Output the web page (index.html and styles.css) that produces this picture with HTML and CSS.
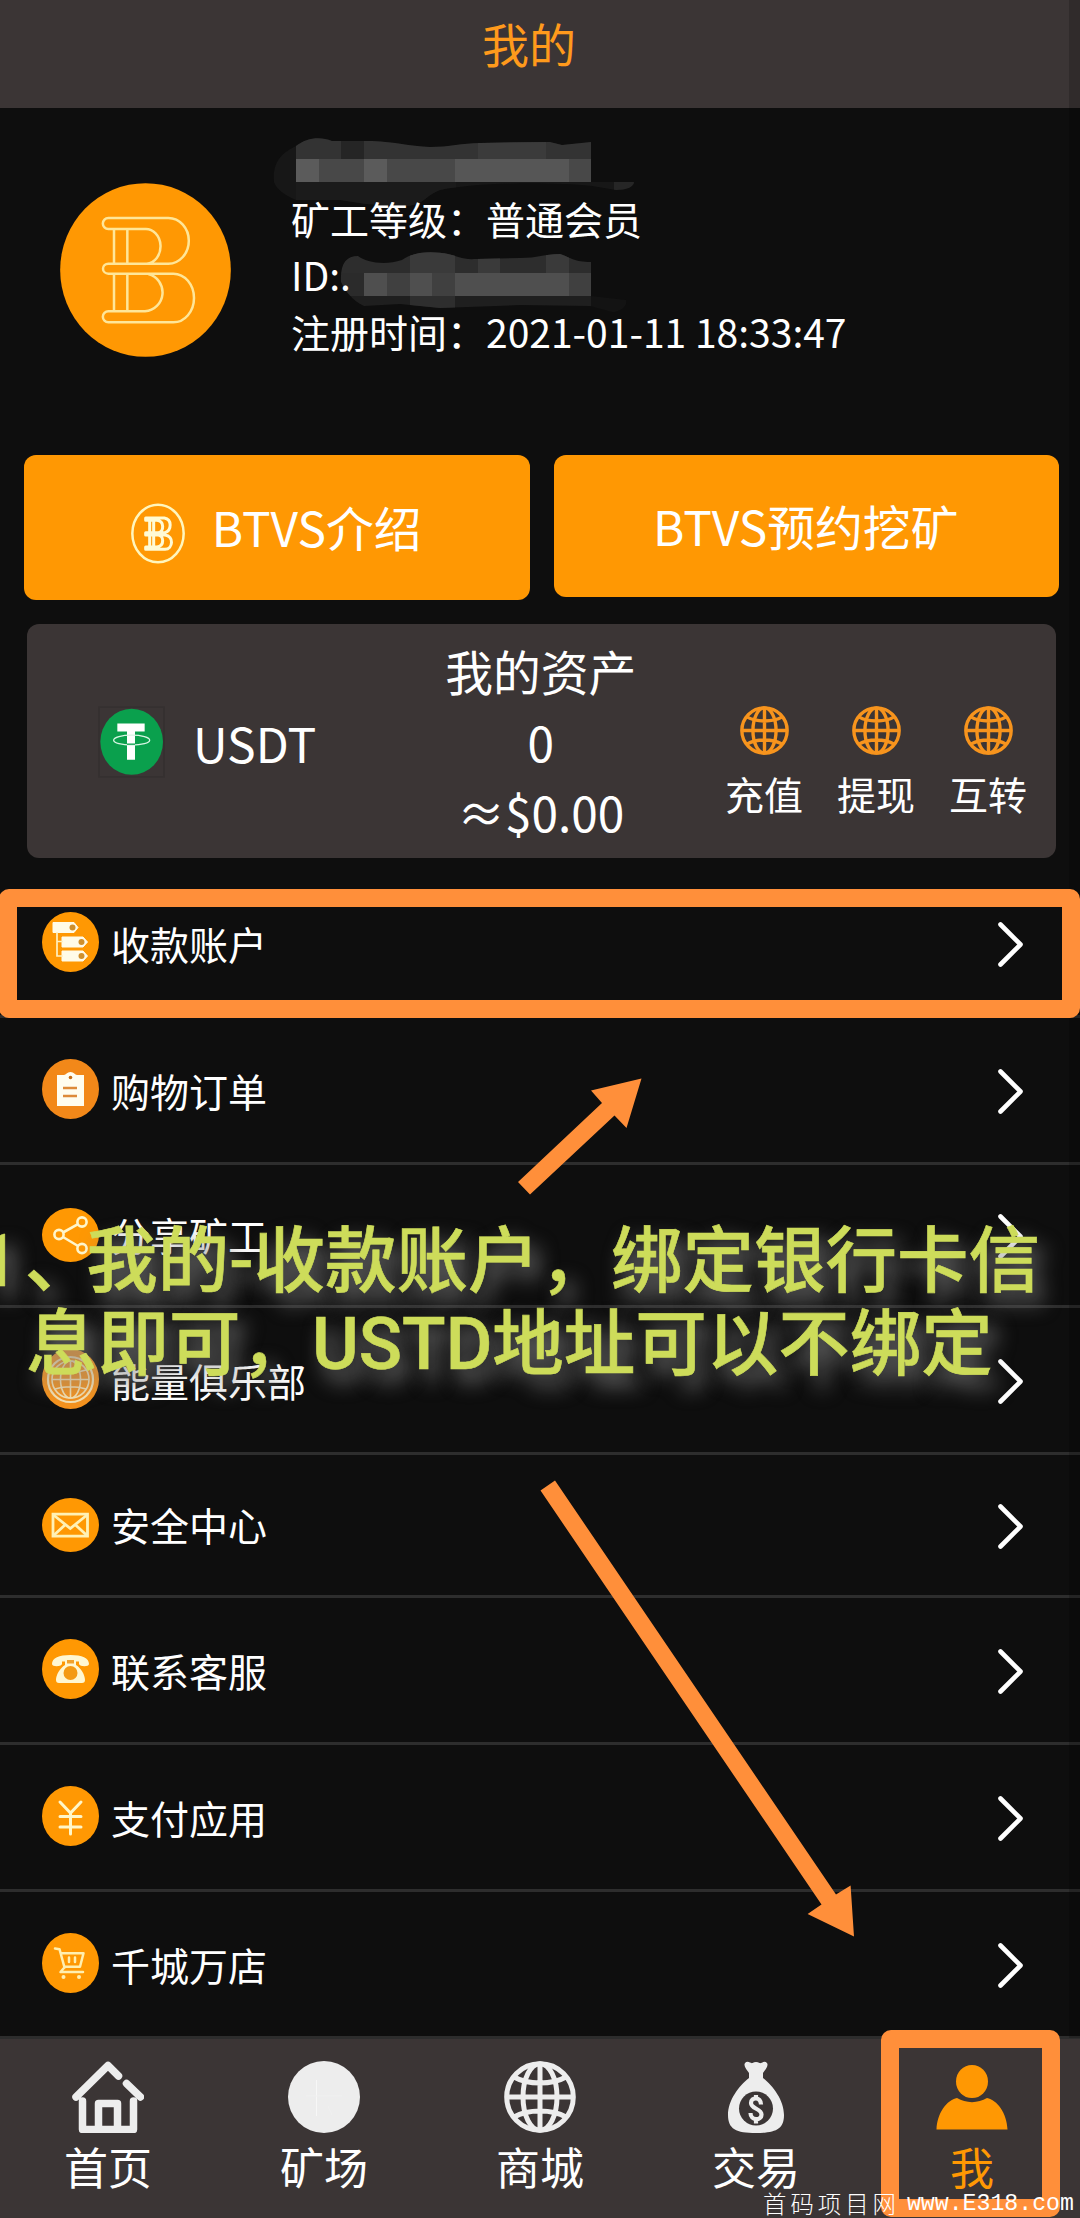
FILE: index.html
```html
<!DOCTYPE html>
<html lang="zh-CN">
<head>
<meta charset="utf-8">
<title>我的</title>
<link rel="stylesheet" href="styles.css">
</head>
<body>
<svg class="defs" aria-hidden="true">
  <symbol id="chevron" viewBox="0 0 25 45"><path d="M2.5 2.5 22.5 22.5 2.5 42.5" fill="none" stroke="#fff" stroke-width="4.600" stroke-linecap="round" stroke-linejoin="round"/></symbol>
  <symbol id="globe" viewBox="0 0 72 72"><g fill="none" stroke="currentColor" stroke-width="5"><circle cx="36" cy="36" r="33.3"/><ellipse cx="36" cy="36" rx="17" ry="33.3"/><path d="M36 3v66M3 36h66M10 16c14 8 38 8 52 0M10 56c14-8 38-8 52 0"/></g></symbol>
</svg>
<div class="screen">
  <header class="topbar">我的</header>

  <section class="profile">
    <svg class="avatar" viewBox="60 69 513 522">
      <ellipse cx="316.500" cy="330" rx="256" ry="260.500" fill="#ff9803"/>
      <g fill="none" stroke="#ffe698" stroke-width="7.500">
        <path d="M385 174H205a16 16 0 0 0 0 33H315a44 52 0 0 1 5 104M385 174a61 68 0 0 1 0 137H205a16 15 0 0 0 0 30H400a62 73 0 0 1 0 146H205a16 16 0 0 1 0-33H315a57 57 0 0 0 10-112"/>
        <path d="M222 207v104M262 207v104M222 341v113M262 341v113"/>
      </g>
    </svg>
    <div class="facts">
      <p>&nbsp;</p>
      <p>矿工等级：普通会员</p>
      <p>ID:.</p>
      <p>注册时间：2021-01-11 18:33:47</p>
    </div>
    <svg class="redaction" viewBox="270 130 380 190">
      <clipPath id="blobA"><path d="M274 182C272 160 284 152 296 146C306 138 320 136 332 141L372 141C396 142 408 146 430 147C450 147 462 143 480 143L550 142L562 145L591 142V182H634C634 187 626 190 616 190L592 186C550 182 480 182 440 190C424 196 424 206 404 206L366 204L340 200L296 200C282 194 276 188 274 182Z"/></clipPath>
      <g clip-path="url(#blobA)">
        <path fill="#171717" d="M270 130h370v80H270z"/>
        <path fill="#333" d="M296 130h295v29H296z"/>
        <path fill="#252525" d="M341 130h23v29h-23z"/>
        <path fill="#3b3b3b" d="M478 130h68v29h-68z"/>
        <path fill="#484848" d="M296 159h295v23H296z"/>
        <path fill="#5b5b5b" d="M296 159h23v23h-23zM364 159h23v23h-23z"/>
        <path fill="#565656" d="M455 159h114v23H455z"/>
        <path fill="#1b1b1b" d="M296 182h160v26H296z"/>
        <path fill="#121212" d="M591 130h50v52h-50z"/>
        <path fill="#262626" d="M614 182h22v12h-22z"/>
      </g>
      <clipPath id="blobB"><path d="M341 282C340 264 346 256 358 256C366 262 384 266 402 260C416 250 436 252 448 254C458 256 462 260 476 259L520 258C538 258 544 254 560 254C572 258 574 262 591 262V296L626 300C628 306 620 312 612 312L590 306L520 305L440 308L400 304L364 306C352 300 346 292 341 282Z"/></clipPath>
      <g clip-path="url(#blobB)">
        <path fill="#2d2d2d" d="M340 250h251v23H340z"/>
        <path fill="#3a3a3a" d="M410 250h45v23h-45zM478 250h22v23h-22zM546 250h23v23h-23z"/>
        <path fill="#404040" d="M364 273h227v23H364z"/>
        <path fill="#2b2b2b" d="M340 273h24v23h-24z"/>
        <path fill="#4f4f4f" d="M364 273h23v23h-23zM410 273h22v23h-22zM455 273h114v23H455z"/>
        <path fill="#1f1f1f" d="M340 296h251v20H340z"/>
        <path fill="#2e2e2e" d="M410 296h45v20h-45z"/>
        <path fill="#131313" d="M591 296h40v20h-40z"/>
      </g>
    </svg>
  </section>

  <div class="actions">
    <a class="action tall">
      <svg class="coin" viewBox="122 26 162 181">
        <ellipse cx="203" cy="116.500" rx="77" ry="86.500" fill="none" stroke="#fff6bd" stroke-width="7.500"/>
        <g fill="none" stroke="#fffbd5" stroke-width="9" stroke-linecap="round" stroke-linejoin="round">
          <path d="M222 70H166v7H200c22 2 22 34 4 37M222 70c24 4 22 38 2 44H166v7H224c28 4 24 42 0 43H166v-7H200c24-4 20-34 4-36M178 77v80M190 77v80"/>
        </g>
      </svg>
      <span>BTVS介绍</span>
    </a>
    <a class="action"><span>BTVS预约挖矿</span></a>
  </div>

  <section class="assets">
    <div class="token">
      <svg class="tether" viewBox="24 634 201 215">
        <rect x="27" y="637" width="195" height="209" fill="none" stroke="#353030" stroke-width="5"/>
        <ellipse cx="125" cy="741" rx="94" ry="99" fill="#0aa04d"/>
        <path d="M82 686h82v24h-29v85h-24v-85H82z" fill="#fff"/>
        <ellipse cx="125" cy="736" rx="54" ry="15" fill="none" stroke="#d9f5e4" stroke-width="4"/>
        <path d="M111 748h24" stroke="#0aa04d" stroke-width="4"/>
      </svg>
      <span>USDT</span>
    </div>
    <div class="balance"><p>我的资产</p><p>0</p><p>≈$0.00</p></div>
    <div class="ops">
      <a class="op"><svg><use href="#globe"/></svg>充值</a>
      <a class="op"><svg><use href="#globe"/></svg>提现</a>
      <a class="op"><svg><use href="#globe"/></svg>互转</a>
    </div>
  </section>

  <nav class="menu">
    <a class="row">
      <svg class="icon" viewBox="0 0 57 60"><ellipse cx="28.500" cy="30" rx="28.500" ry="30" fill="#ff9803"/>
        <path d="M11 10.500h21l4 5-4 5H11zM20 25h21l4.500 5-4.500 5H20zM20 39h21l4.500 5-4.500 5H20z" fill="#fffbe8" stroke="#fffbe8" stroke-linejoin="round"/>
        <path d="M15 20v24h6M15 29.500h6" fill="none" stroke="#fff0c0" stroke-width="1.700"/>
        <g fill="#cf8f2c"><circle cx="30.500" cy="15.500" r="3"/><circle cx="39.500" cy="30" r="3"/><circle cx="39.500" cy="44" r="3"/></g></svg>
      <span>收款账户</span><svg class="chev"><use href="#chevron"/></svg>
    </a>
    <a class="row">
      <svg class="icon" viewBox="0 0 57 60"><ellipse cx="28.500" cy="30" rx="28.500" ry="30" fill="#f28819"/>
        <path d="M15 16h7c2 0 3-3 6.500-3s4.500 3 6.500 3h7v31H15z" fill="#fffdf0"/>
        <circle cx="28.500" cy="18.500" r="1.800" fill="#c46a14"/><path d="M21 29h14M21 37h14" stroke="#dd8a3a" stroke-width="2.600"/></svg>
      <span>购物订单</span><svg class="chev"><use href="#chevron"/></svg>
    </a>
    <a class="row short">
      <svg class="icon" viewBox="0 0 57 54"><ellipse cx="28.500" cy="27" rx="28.500" ry="27" fill="#ff9803"/>
        <g fill="none" stroke="#fff6cc" stroke-width="2.600"><circle cx="17" cy="26.500" r="4.600"/><circle cx="40" cy="14" r="4.600"/><circle cx="40" cy="40.500" r="4.600"/><path d="M21 24.500l15-8.300M21 29l15 9"/></g></svg>
      <span>分享矿工</span><svg class="chev"><use href="#chevron"/></svg>
    </a>
    <a class="row">
      <svg class="icon" viewBox="0 0 57 60"><ellipse cx="28.500" cy="30" rx="28.500" ry="30" fill="#f6921c"/>
        <g fill="none" stroke="#f7e3b4" stroke-width="1.600"><circle cx="28.500" cy="30.500" r="22.500" stroke-width="2.200"/><circle cx="28.500" cy="30.500" r="18.500"/><ellipse cx="28.500" cy="30.500" rx="10" ry="18.500"/><path d="M28.500 12v37M10 30.500h37M13 21c9 3 22 3 31 0M13 40c9-3 22-3 31 0"/></g></svg>
      <span>能量俱乐部</span><svg class="chev"><use href="#chevron"/></svg>
    </a>
    <a class="row short">
      <svg class="icon" viewBox="0 0 57 54"><ellipse cx="28.500" cy="27" rx="28.500" ry="27" fill="#ff9803"/>
        <g fill="none" stroke="#fff1b5" stroke-width="2.800"><path d="M11 16.200h34.500v22H11z"/><path d="M11.500 17l16.800 13.500L45 17M11.500 37.500l12-11M45 37.500l-12-11"/></g></svg>
      <span>安全中心</span><svg class="chev"><use href="#chevron"/></svg>
    </a>
    <a class="row">
      <svg class="icon" viewBox="0 0 57 60"><ellipse cx="28.500" cy="30" rx="28.500" ry="30" fill="#ff9803"/>
        <path d="M10 25c0-6 7-9 18.500-9S47 19 47 25c0 3-9 3-10 0v-2.500h-3V26c5 3 9 10 9 15 0 2-1 3-3 3H17c-2 0-3-1-3-3 0-5 4-12 9-15v-3.500h-3V25c-1 3-10 3-10 0z" fill="#fff7d2"/>
        <circle cx="28.500" cy="34" r="7" fill="#f49a14"/><path d="M25 21h7v3.500h-7z" fill="#f2a22c"/></svg>
      <span>联系客服</span><svg class="chev"><use href="#chevron"/></svg>
    </a>
    <a class="row">
      <svg class="icon" viewBox="0 0 57 60"><ellipse cx="28.500" cy="30" rx="28.500" ry="30" fill="#ff9803"/>
        <path d="M18 16l10.500 11L39 16M28.500 27v21M18 30.500h21M18 41h21" fill="none" stroke="#fff6c8" stroke-width="3" stroke-linecap="round"/></svg>
      <span>支付应用</span><svg class="chev"><use href="#chevron"/></svg>
    </a>
    <a class="row">
      <svg class="icon" viewBox="0 0 57 60"><ellipse cx="28.500" cy="30" rx="28.500" ry="30" fill="#ff9803"/>
        <path d="M13 15.500l4.500.7L22.500 34.500M19 20.300h22.500L38 33.800H23L18.500 39H41M27 24.500v4.500M33 24.500v4.500" fill="none" stroke="#ffefb0" stroke-width="2.500" stroke-linecap="round" stroke-linejoin="round"/>
        <circle cx="21.500" cy="44" r="2" fill="#ffefb0"/><circle cx="37" cy="44" r="2" fill="#ffefb0"/></svg>
      <span>千城万店</span><svg class="chev"><use href="#chevron"/></svg>
    </a>
  </nav>

  <nav class="tabs">
    <a class="tab"><svg viewBox="0 0 72 72"><g fill="none" stroke="currentColor" stroke-width="7.500" stroke-linecap="round" stroke-linejoin="round"><path d="M4 36 36 4.500 46.500 15M54.500 22.500 68.500 36M10.500 40v28.500h51V40"/><path d="M26.500 66V42.500h19V66"/></g></svg>首页</a>
    <a class="tab"><svg viewBox="0 0 72 72"><circle cx="36" cy="36" r="36" fill="currentColor"/><path d="M28.500 19v36" stroke="#f7f7f7"/><path d="M18 35h36M40 45l4 9" stroke="#f0f0f0"/></svg>矿场</a>
    <a class="tab"><svg><use href="#globe"/></svg>商城</a>
    <a class="tab"><svg viewBox="0 0 72 72"><path d="M25 2c3-3 6 1 7.500 0 2-1.500 5-1.500 7 0 1.500 1 4.500-3 7.500 0 2 3-2 7-4 10v5c10 8 21 22 21 37 0 14-8 18-28 18S8 68 8 54c0-15 11-29 21-37v-5c-2-3-6-7-4-10z" fill="currentColor"/><circle cx="36" cy="47.500" r="17" fill="#3b3535"/><path d="M41 43.500c0-8-10-8-10-1.500 0 6 10.500 5.500 10.500 11.500 0 6.500-11 6.500-11-1.500M36 34v4M36 57.500v5" fill="none" stroke="currentColor" stroke-width="4.200"/></svg>交易</a>
    <a class="tab active"><svg viewBox="0 0 72 72"><ellipse cx="36" cy="20.500" rx="16" ry="16.500" fill="currentColor"/><path d="M.5 68.500C1 52 11 39 21 37c9 5.500 21 5.500 30 0 10 2 20 15 20.500 31.500z" fill="currentColor"/></svg>我</a>
  </nav>

  <div class="edge"></div>
  <p class="caption"><span><span class="num">1</span><span class="mark">、</span>我的-收款账户，绑定银行卡信</span><span>息即可，USTD地址可以不绑定</span></p>
  <div class="frame frame-account"></div>
  <div class="frame frame-me"></div>
  <svg class="arrows" viewBox="0 0 1080 2218"><path fill="#ff8f3a" d="M518 1182 602 1103 591 1090.500 641.500 1078.500 626.500 1128 614.500 1115.500 530 1194.500zM540.500 1490.500 555 1480.500 836 1894.500 850.600 1885.500 854 1936.500 807.600 1914 821.500 1904.500z"/></svg>
  <p class="watermark"><span class="wm-name">首码项目网</span><span class="wm-url">www.E318.com</span></p>
</div>
</body>
</html>
```
FILE: styles.css
```css
* { box-sizing: border-box; }
body { margin: 0; background: #0e0e0e; }
p { margin: 0; }
.defs { position: absolute; width: 0; height: 0; }

.screen {
  position: relative;
  width: 1080px;
  height: 2218px;
  overflow: hidden;
  background: #0e0e0e;
  color: #fff;
  font-family: "Noto Sans CJK SC", sans-serif;
  font-size: 39px;
}

.topbar {
  height: 108px;
  padding-bottom: 24px;
  display: flex;
  align-items: center;
  justify-content: center;
  padding-right: 22px;
  background: #3b3535;
  color: #ff9a1c;
  font-size: 47px;
}

.profile {
  position: relative;
  height: 347px;
  padding: 25px 0 0 60px;
  display: flex;
  gap: 60px;
}
.avatar { width: 171px; height: 174px; margin-top: 50px; }
.facts { position: relative; z-index: 1; }
.facts p { line-height: 56.5px; white-space: nowrap; }
.redaction { position: absolute; left: 270px; top: 22px; width: 380px; height: 190px; }

.actions {
  display: flex;
  align-items: flex-start;
  gap: 24px;
  padding: 0 21px 0 24px;
  height: 169px;
}
.action {
  flex: 1;
  height: 142px;
  display: flex;
  align-items: center;
  justify-content: center;
  gap: 27px;
  padding: 0 1px 1px 0;
  border-radius: 12px;
  background: #ff9803;
  font-size: 47.8px;
}
.action.tall { height: 145px; padding-bottom: 3px; }
.coin { width: 54px; height: 61px; margin-top: 15px; }

.assets {
  margin: 0 24px 0 27px;
  height: 234px;
  display: grid;
  grid-template-columns: repeat(3, 1fr);
  border-radius: 12px;
  background: #3b3535;
}
.token { display: flex; align-items: center; gap: 28px; padding: 1px 0 0 71px; font-size: 48px; }
.tether { width: 67px; height: 72px; }
.balance { padding: 12px 0 0 6px; text-align: center; font-size: 47.8px; line-height: 70.5px; }
.ops { display: flex; justify-content: flex-end; padding: 82px 12px 0 0; }
.op { width: 112px; display: flex; flex-direction: column; align-items: center; gap: 10px; line-height: 56px; }
.op svg { width: 49px; height: 49px; color: #f7941d; }

.menu { margin-top: 13px; }
.row {
  height: 147px;
  display: flex;
  align-items: center;
  padding: 0 57px 0 42px;
  border-bottom: 3px solid #2d2d2d;
}
.row.short { height: 143px; }
.row .icon { width: 57px; height: 60px; margin: -3px 12px 0 0; }
.row.short .icon { height: 54px; margin-top: 0; }
.row span { flex: 1; }
.row.short span { margin-top: -3px; }
.row .chev { width: 25px; height: 45px; margin-top: 3px; }

.tabs { height: 180px; display: flex; padding-top: 22px; background: #3b3535; }
.tab {
  flex: 1;
  display: flex;
  flex-direction: column;
  align-items: center;
  font-size: 44px;
  line-height: 67px;
}
.tab svg { width: 72px; height: 72px; color: #ededed; }
.tab.active, .tab.active svg { color: #ff9803; }

.edge { position: absolute; right: 0; top: 0; width: 11px; height: 2038px; background: rgba(0, 0, 0, 0.18); }

.caption {
  position: absolute;
  left: -24px;
  top: 1220px;
  color: #cddc5a;
  font-family: Roboto, "Noto Sans CJK SC", sans-serif;
  font-weight: 500;
  font-size: 71.5px;
  line-height: 83px;
  white-space: nowrap;
  -webkit-text-stroke: 0.6px #cddc5a;
  text-shadow: 8px 12px 20px rgba(130, 130, 130, 0.95);
}
.caption > span { display: block; }
.caption > span + span { padding-left: 50px; }
.num { margin: 0 -2px 0 2px; }
.mark { margin: 0 -10px 0 8px; }

.frame { position: absolute; border: 18px solid #ff8f3a; }
.frame-account { left: -1px; top: 889px; width: 1081px; height: 129px; border-radius: 10px; }
.frame-me { left: 881px; top: 2030px; width: 179px; height: 187px; border-radius: 10px; }

.arrows { position: absolute; left: 0; top: 0; width: 1080px; height: 2218px; }

.watermark {
  position: absolute;
  left: 763px;
  top: 2187px;
  display: flex;
  align-items: center;
  gap: 7px;
  line-height: 31px;
  white-space: nowrap;
}
.wm-name { font-size: 23.4px; font-weight: 300; letter-spacing: 4px; }
.wm-url { font-family: "Liberation Mono", monospace; font-size: 23.2px; padding-top: 2px; }
```
